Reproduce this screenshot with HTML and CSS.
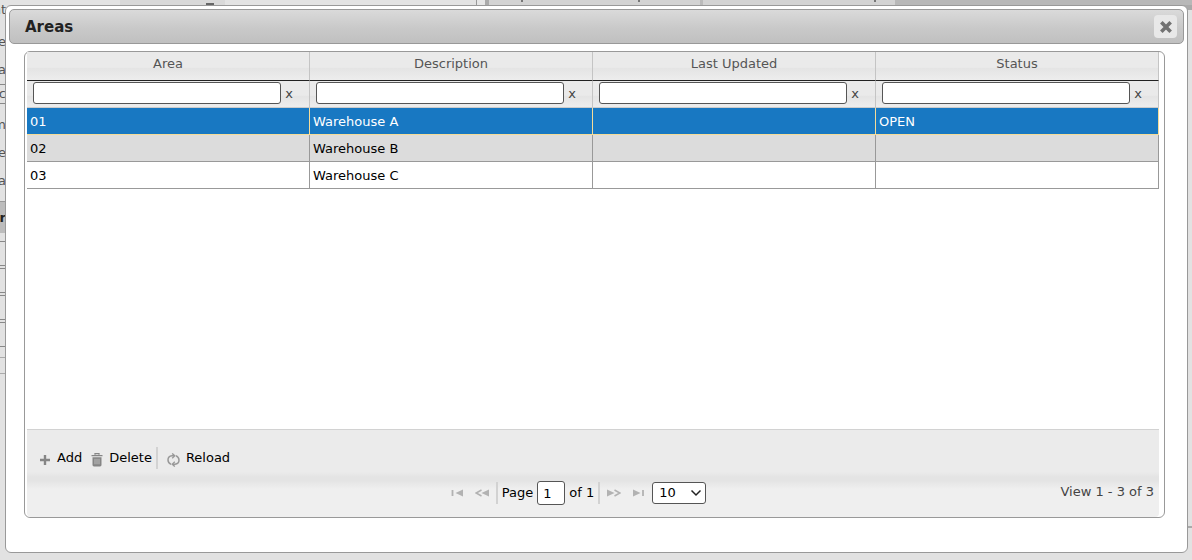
FILE: index.html
```html
<!DOCTYPE html>
<html lang="en">
<head>
<meta charset="utf-8">
<meta name="viewport" content="width=device-width, initial-scale=1">
<title>Areas</title>
<link rel="stylesheet" href="styles.css">
</head>
<body>
<div class="backdrop" aria-hidden="true">
  <div class="back-top">
    <span class="tab tab-side"></span>
    <span class="tab tab-small"><i class="dash"></i></span>
    <span class="tab tab-wide"></span>
    <span class="tab-split"></span>
    <span class="tab tab-dark tab-first"><i class="tick"></i><i class="tick"></i></span>
    <span class="tab tab-dark tab-second"><i class="tick"></i></span>
    <span class="tab-rest"></span>
  </div>
  <div class="back-main">
    <div class="back-form">
      <span class="lbl lbl-first">nt</span>
      <span class="lbl">e</span>
      <span class="lbl">ta</span>
      <span class="lbl field">c</span>
      <span class="lbl">m</span>
      <span class="lbl">e</span>
      <span class="lbl">a</span>
      <span class="lbl section">er</span>
      <span class="slot"></span>
      <span class="slot"></span>
      <span class="slot"></span>
      <span class="slot"></span>
      <span class="slot slot-short"></span>
    </div>
    <div class="back-side"></div>
  </div>
</div>

<section class="dialog" role="dialog" aria-labelledby="dialog-title">
  <header class="titlebar">
    <h1 class="title" id="dialog-title">Areas</h1>
    <button class="close" type="button" aria-label="Close">
      <svg width="14" height="14" viewBox="0 0 14 14"><path d="M3.6 3.6 L10.4 10.4 M10.4 3.6 L3.6 10.4" stroke="#727272" stroke-width="3.6" stroke-linecap="square"/></svg>
    </button>
  </header>

  <div class="grid">
    <div class="grid-view">
      <table class="table">
        <thead>
          <tr class="heads"><th scope="col">Area</th><th scope="col">Description</th><th scope="col">Last Updated</th><th scope="col">Status</th></tr>
          <tr class="filters">
            <td><div class="filter"><input type="text" aria-label="Filter by area"><button type="button" aria-label="Clear area filter">x</button></div></td>
            <td><div class="filter"><input type="text" aria-label="Filter by description"><button type="button" aria-label="Clear description filter">x</button></div></td>
            <td><div class="filter"><input type="text" aria-label="Filter by last updated"><button type="button" aria-label="Clear last updated filter">x</button></div></td>
            <td><div class="filter"><input type="text" aria-label="Filter by status"><button type="button" aria-label="Clear status filter">x</button></div></td>
          </tr>
        </thead>
        <tbody>
          <tr class="row selected" aria-selected="true"><td>01</td><td>Warehouse A</td><td></td><td>OPEN</td></tr>
          <tr class="row alt"><td>02</td><td>Warehouse B</td><td></td><td></td></tr>
          <tr class="row"><td>03</td><td>Warehouse C</td><td></td><td></td></tr>
        </tbody>
      </table>
    </div>

    <footer class="pager">
      <div class="tools">
        <button class="tool" type="button"><svg class="ico" width="12" height="12" viewBox="0 0 12 12"><path d="M6 1 V11 M1 6 H11" stroke="#858585" stroke-width="2.4" fill="none"/></svg>Add</button>
        <button class="tool" type="button"><svg class="ico" width="12" height="14" viewBox="0 0 12 14"><path d="M4 1.8 V.7 H8 V1.8 M.5 2.6 H11.5" stroke="#858585" stroke-width="1.3" fill="none"/><path d="M1.5 4.2 H10.5 V12 Q10.5 13.4 9 13.4 H3 Q1.5 13.4 1.5 12 Z" fill="#858585"/><path d="M4 5.8 V11.3 M6 5.8 V11.3 M8 5.8 V11.3" stroke="#c4c4c4" stroke-width=".9"/></svg>Delete</button>
        <span class="sep"></span>
        <button class="tool" type="button"><svg class="ico" width="13" height="14" viewBox="0 0 13 14"><path d="M4 11.4 Q1 9.8 1 7 Q1 3.2 5 2.8 H7 M9 2.6 Q12 4.2 12 7 Q12 10.8 8 11.2 H6" stroke="#989898" stroke-width="1.5" fill="none"/><path d="M5.2 .4 L7.8 2.8 L5.2 5.2 M7.8 8.8 L5.2 11.2 L7.8 13.6" stroke="#989898" stroke-width="1.3" fill="none"/></svg>Reload</button>
      </div>
      <div class="paging">
        <div class="pages">
          <button class="nav" type="button" aria-label="First page" disabled><svg width="14" height="8" viewBox="0 0 14 8"><path d="M1.5 1 V7" stroke="#b2b2b2" stroke-width="1.8"/><path d="M12 .6 V7.4 L4.5 4 Z" fill="#b2b2b2"/></svg></button>
          <button class="nav" type="button" aria-label="Previous page" disabled><svg width="14" height="8" viewBox="0 0 14 8"><path d="M6.5 1 L1.2 4 L6.5 7" stroke="#b2b2b2" stroke-width="1.5" fill="none"/><path d="M14 .6 V7.4 L6.5 4 Z" fill="#b2b2b2"/></svg></button>
          <span class="sep"></span>
          <label for="page">Page</label>
          <input class="page" id="page" type="text" value="1">
          <span>of 1</span>
          <span class="sep"></span>
          <button class="nav" type="button" aria-label="Next page" disabled><svg width="14" height="8" viewBox="0 0 14 8"><path d="M0 .6 V7.4 L7.5 4 Z" fill="#b2b2b2"/><path d="M7.5 1 L12.8 4 L7.5 7" stroke="#b2b2b2" stroke-width="1.5" fill="none"/></svg></button>
          <button class="nav" type="button" aria-label="Last page" disabled><svg width="14" height="8" viewBox="0 0 14 8"><path d="M2 .6 V7.4 L9.5 4 Z" fill="#b2b2b2"/><path d="M12 1 V7" stroke="#b2b2b2" stroke-width="1.8"/></svg></button>
          <span class="select">
            <select aria-label="Rows per page"><option>10</option><option>20</option><option>30</option></select>
            <svg class="chev" width="12" height="8" viewBox="0 0 12 8"><path d="M1.5 1.5 L6 6 L10.5 1.5" stroke="#222" stroke-width="1.5" fill="none"/></svg>
          </span>
        </div>
        <span class="count">View 1 - 3 of 3</span>
      </div>
    </footer>
  </div>
</section>
</body>
</html>
```
FILE: styles.css
```css
* { box-sizing: border-box; }

body {
  margin: 0;
  min-height: 100vh;
  display: grid;
  background: #e2e2e2;
  color: #000;
  font: 13px/16px "DejaVu Sans", Verdana, sans-serif;
}

button, input, select { font: inherit; color: inherit; }
button { padding: 0; border: 0; background: none; }

.backdrop, .dialog { grid-area: 1 / 1; min-width: 0; }

/* Page behind the dialog */
.backdrop { display: flex; flex-direction: column; overflow: hidden; }
.back-top { display: flex; height: 5px; background: #b8b8b8; }
.tab { display: flex; background: #e3e3e3; }
.tab-side { width: 120px; }
.tab-small { width: 105px; background: #d9d9d9; justify-content: flex-end; padding: 3px 11px 0 0; }
.tab-wide { width: 252px; border-right: 1px solid #999; }
.tab-split { width: 12px; background: #e6e6e6; border-right: 4px solid #aaa; }
.tab-dark { background: #d3d3d3; border-right: 3px solid #bbb; }
.tab-first { width: 214px; padding-left: 32px; gap: 115px; }
.tab-second { width: 192px; padding-left: 171px; border: 0; }
.tab-rest { flex: 1; background: #b8b8b8; }
.dash { width: 8px; height: 2px; background: #666; }
.tick { width: 2px; height: 2px; background: #777; }
.back-main { flex: 1; display: flex; justify-content: space-between; }
.back-form { width: 6px; display: flex; flex-direction: column; }
.lbl { display: flex; justify-content: flex-end; align-items: center; height: 28px; color: #555; }
.lbl-first { height: 10px; margin-bottom: 13px; }
.field { height: 20px; margin-bottom: 7px; border: solid #888; border-width: 1px 0; }
.section { height: 32px; margin: 6px 0 8px; background: #bcbcbc; border-top: 1px solid #999; color: #222; font-weight: bold; }
.slot { height: 25px; margin-bottom: 2px; border: solid #888; border-width: 1px 0; }
.slot-short { height: 17px; margin-top: 8px; border-color: #aaa; }
.back-side { width: 16px; margin-bottom: 32px; border: solid #aaa; border-width: 5px 0 2px; }

/* Dialog */
.dialog {
  z-index: 1;
  margin: 5px 4px 7px 5px;
  padding: 3px;
  display: flex;
  flex-direction: column;
  background: #fff;
  border: 1px solid #999;
  border-radius: 6px;
}
.titlebar {
  display: flex;
  align-items: center;
  justify-content: space-between;
  height: 35px;
  padding: 0 6px 0 15px;
  border: 1px solid #999;
  border-radius: 5px;
  background: linear-gradient(#dadada, #c9c9c9 55%, #c0c0c0);
}
.title { margin: 0; font-size: 15px; line-height: 18px; color: #222; }
.close {
  display: grid;
  place-items: center;
  width: 23px;
  height: 23px;
  border-radius: 4px;
  background: #e8e8e8;
}

/* Grid */
.grid {
  flex: 1;
  display: flex;
  flex-direction: column;
  margin: 7px 19px 31px 15px;
  padding: 0 5px 0 2px;
  border: 1px solid #999;
  border-radius: 6px;
}
.grid-view { flex: 1; }
.table { width: 100%; table-layout: fixed; border-spacing: 0; }
.table th, .table td { padding: 0; border-right: 1px solid #c4c4c4; }
.heads th {
  height: 29px;
  padding-bottom: 4px;
  border-bottom: 1px solid #222;
  background: linear-gradient(#eaeaea 0 55%, #e4e4e4 58%, #ededed);
  color: #555;
  font-weight: normal;
}
.filters td { height: 27px; border-bottom: 1px solid #ccc; background: linear-gradient(#eaeaea 0 55%, #e4e4e4 58%, #ededed); }
.filter { display: flex; align-items: center; gap: 4px; padding: 0 16px 2px 6px; }
.filter input {
  flex: 1;
  min-width: 0;
  height: 22px;
  padding: 0 4px;
  border: 1px solid #555;
  border-radius: 3px;
  background: #fff;
}
.filter button { width: 8px; padding-top: 2px; color: #444; }
.table .row td { height: 27px; padding: 2px 0 0 3px; border-right-color: #999; border-bottom: 1px solid #999; }
.table .selected td { background: #1878c2; color: #fff; border-color: #f5dc98; }
.alt td { background: #dcdcdc; }

/* Footer */
.pager {
  height: 88px;
  padding: 17px 5px 0;
  border-top: 1px solid #d2d2d2;
  border-radius: 0 0 4px 4px;
  background: linear-gradient(#ebebeb 0 48%, #e4e4e4 54% 58%, #efefef 68%);
}
.tools { display: flex; align-items: center; height: 22px; padding-left: 7px; gap: 9px; }
.tool { display: flex; align-items: center; gap: 6px; }
.ico { margin-top: 3px; }
.sep { width: 2px; height: 22px; background: #d2d2d2; }
.tools .sep { margin-left: -5px; }
.paging { display: grid; grid-template-columns: 1fr auto 1fr; align-items: center; margin-top: 12px; }
.pages { grid-column: 2; display: flex; align-items: center; gap: 4px; margin-right: 32px; }
.nav { display: flex; width: 20px; justify-content: center; }
.page { width: 28px; height: 24px; padding: 0 5px; border: 1px solid #555; border-radius: 3px; background: #fff; }
.select { display: grid; align-items: center; }
.select select, .chev { grid-area: 1 / 1; }
.select select { appearance: none; width: 54px; height: 22px; padding: 0 6px; border: 1px solid #555; border-radius: 3px; background: #fff; }
.chev { justify-self: end; margin-right: 4px; pointer-events: none; }
.count { grid-column: 3; justify-self: end; padding-bottom: 2px; color: #444; }
```
